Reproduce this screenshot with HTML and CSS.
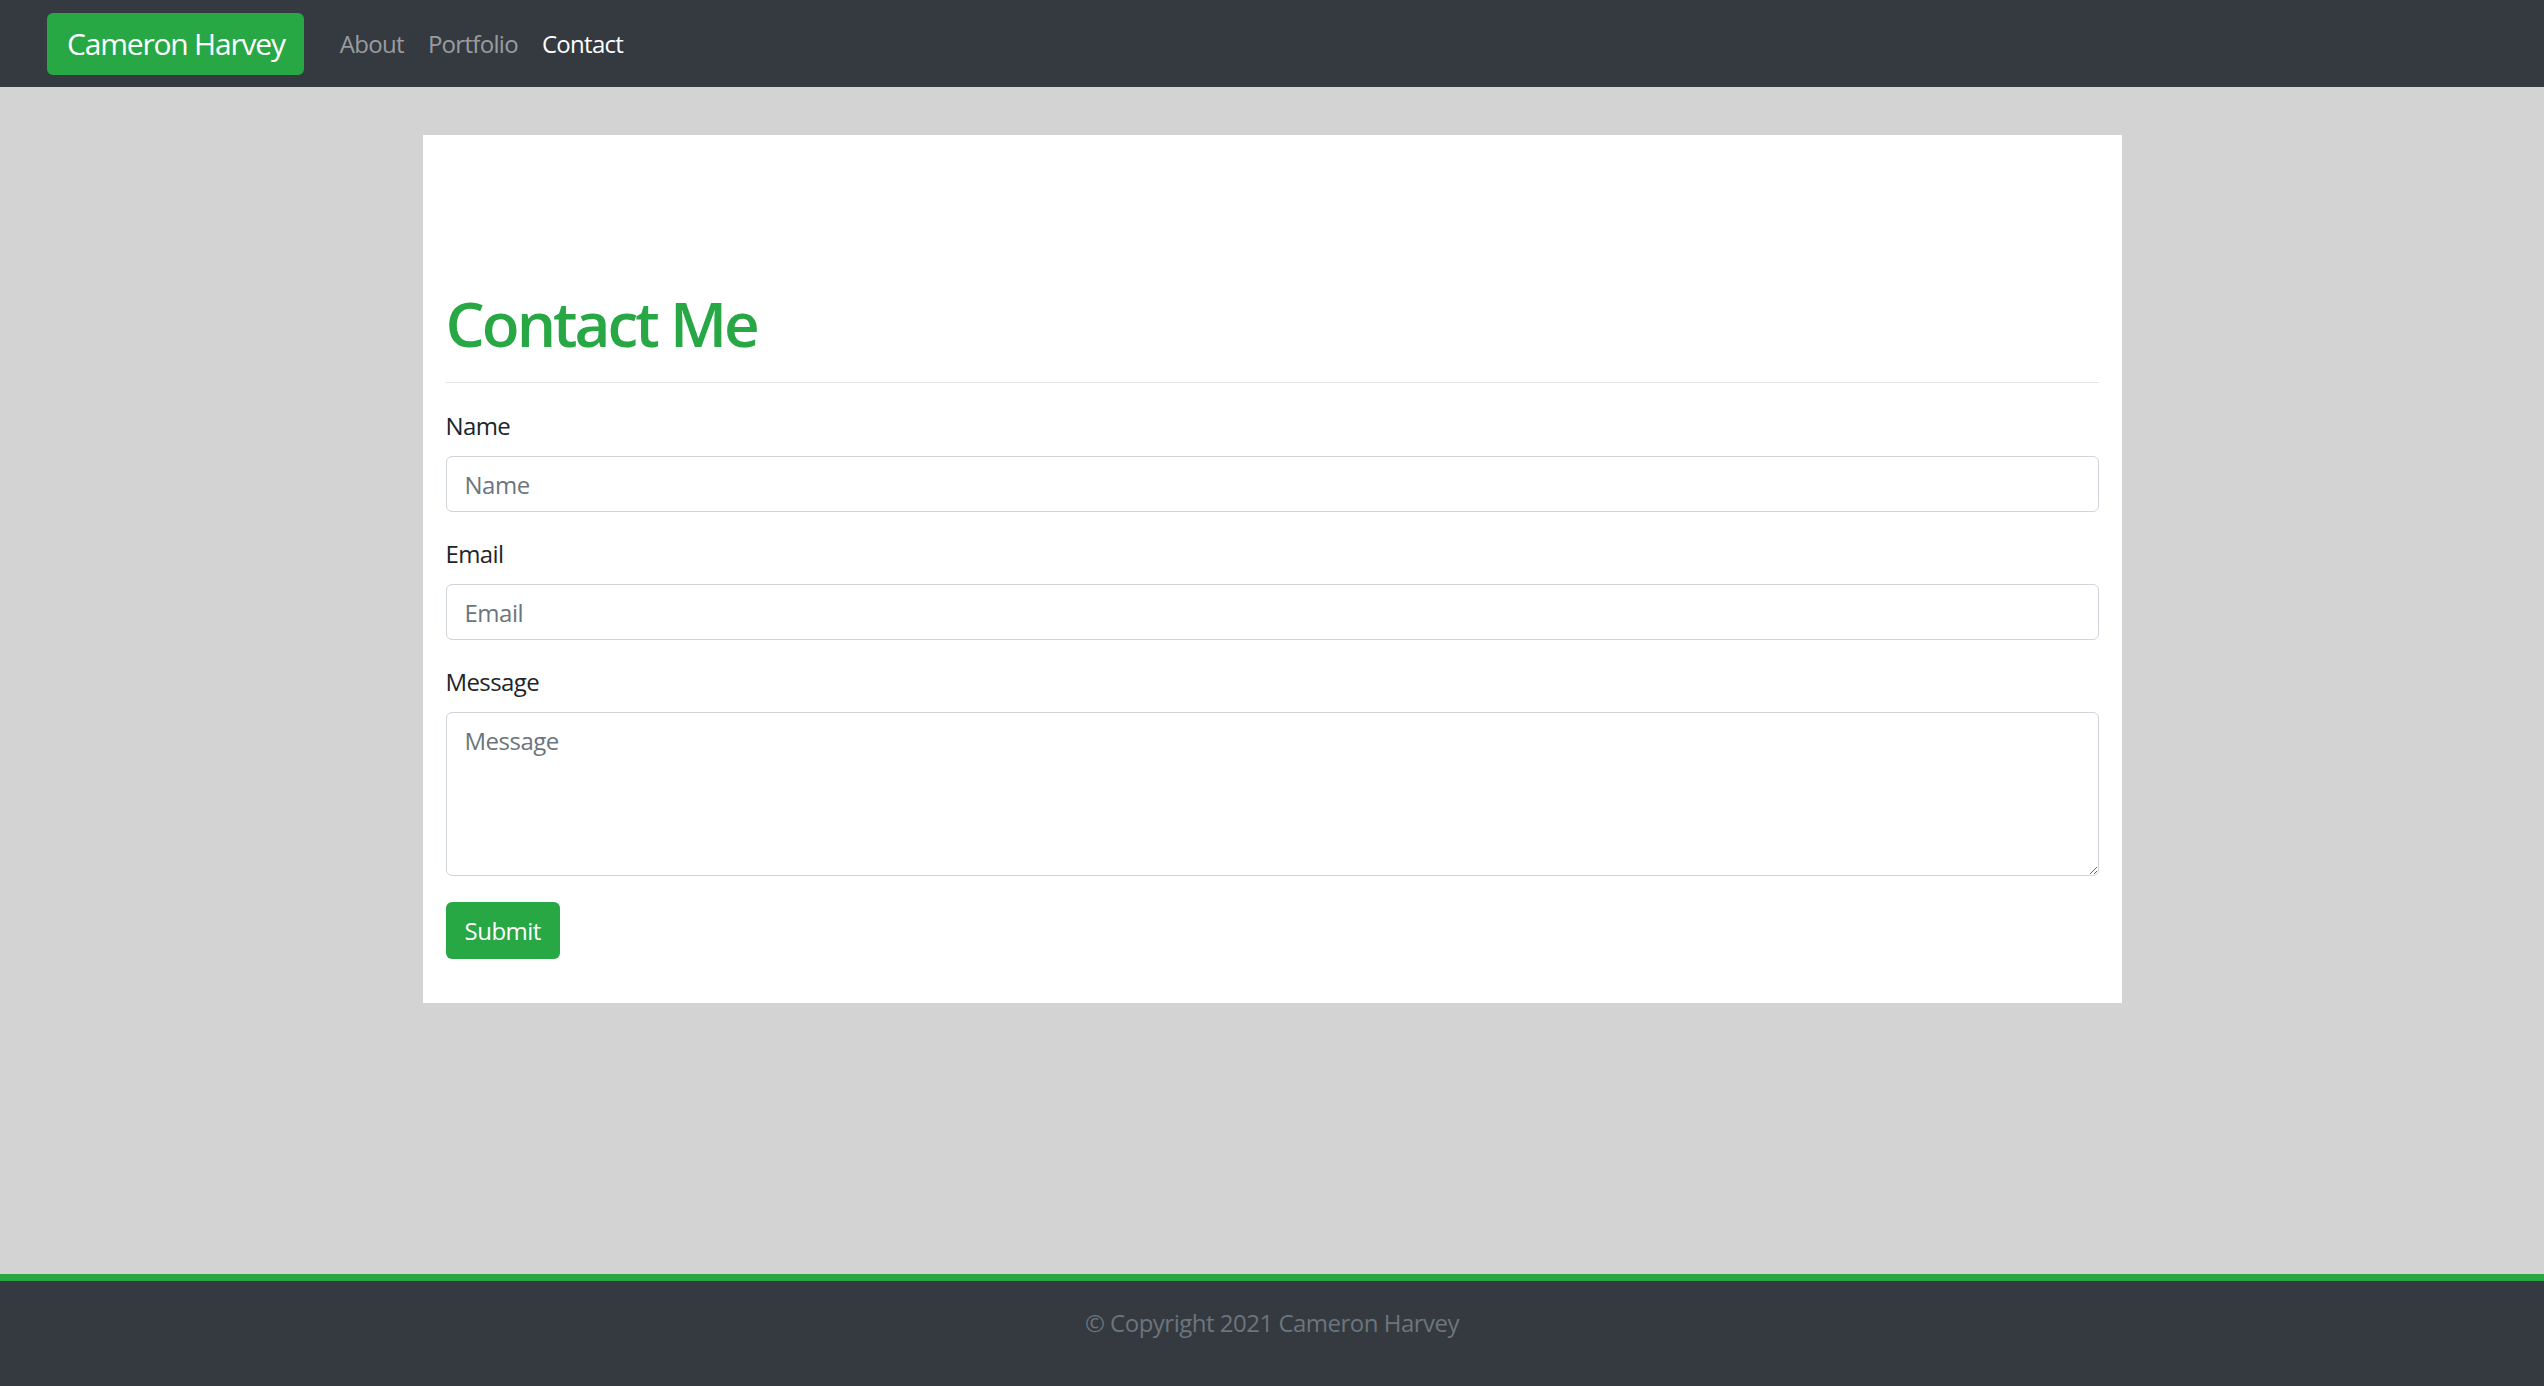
FILE: index.html
```html
<!DOCTYPE html>
<html lang="en">
<head>
<meta charset="utf-8">
<title>Contact - Cameron Harvey</title>
<link rel="stylesheet" href="styles.css">
</head>
<body>
<nav class="navbar">
  <a class="brand" href="#">Cameron Harvey</a>
  <ul class="nav-links">
    <li><a class="nav-link" href="#">About</a></li>
    <li><a class="nav-link" href="#">Portfolio</a></li>
    <li><a class="nav-link active" href="#">Contact</a></li>
  </ul>
</nav>
<main class="main">
  <section class="card">
    <h1 class="title">Contact Me</h1>
    <hr class="divider">
    <form class="form">
      <div class="form-group">
        <label class="label" for="name">Name</label>
        <input class="control" id="name" type="text" placeholder="Name">
      </div>
      <div class="form-group">
        <label class="label" for="email">Email</label>
        <input class="control" id="email" type="email" placeholder="Email">
      </div>
      <div class="form-group form-group-last">
        <label class="label" for="message">Message</label>
        <textarea class="control textarea" id="message" placeholder="Message"></textarea>
      </div>
      <button class="btn" type="submit">Submit</button>
    </form>
  </section>
</main>
<footer class="footer">
  <p class="copyright">© Copyright 2021 Cameron Harvey</p>
</footer>
</body>
</html>
```
FILE: styles.css
```css
* { box-sizing: border-box; }

html, body { margin: 0; padding: 0; }

body {
  font-family: "Open Sans", "Noto Sans", sans-serif;
  background: #d3d3d3;
  color: #212529;
  min-height: 100vh;
  display: flex;
  flex-direction: column;
}

.navbar {
  height: 87px;
  background: #343a40;
  display: flex;
  align-items: center;
  padding: 0 47px;
}

.brand {
  display: flex;
  align-items: center;
  height: 62px;
  padding: 0 19px 0 20px;
  background: #28a745;
  color: #fff;
  font-size: 30px;
  text-decoration: none;
  border-radius: 6px;
  margin-right: 24px;
  letter-spacing: -1.2px;
}

.nav-links {
  list-style: none;
  margin: 0;
  padding: 0;
  display: flex;
}

.nav-link {
  display: block;
  padding: 0 12px;
  font-size: 24px;
  line-height: 36px;
  color: rgba(255, 255, 255, 0.5);
  text-decoration: none;
  letter-spacing: -0.7px;
}

.nav-link.active { color: #fff; }

.main {
  flex: 1;
  padding-top: 48px;
}

.card {
  width: 1699px;
  margin: 0 auto;
  background: #fff;
  padding: 151px 23px 44px;
}

.title {
  margin: 0;
  font-size: 62px;
  line-height: 74px;
  font-weight: 600;
  color: #28a745;
  letter-spacing: -3px;
}

.divider {
  margin: 22px 0 25px;
  border: 0;
  border-top: 1px solid rgba(0, 0, 0, 0.1);
}

.form-group { margin-bottom: 24px; }
.form-group-last { margin-bottom: 26px; }

.label {
  display: block;
  font-size: 24px;
  line-height: 36px;
  margin-bottom: 12px;
  color: #212529;
  letter-spacing: -0.6px;
}

.control {
  display: block;
  width: 100%;
  height: 56px;
  padding: 0 18px;
  font-family: inherit;
  font-size: 24px;
  color: #495057;
  background: #fff;
  border: 1px solid #ced4da;
  border-radius: 6px;
  letter-spacing: -0.5px;
}

.control::placeholder { color: #6c757d; opacity: 1; }

.textarea {
  height: 164px;
  padding: 10px 18px;
  line-height: 36px;
  resize: vertical;
}

.btn {
  display: block;
  height: 57px;
  padding: 0 19px;
  background: #28a745;
  color: #fff;
  font-family: inherit;
  font-size: 24px;
  border: 0;
  border-radius: 6px;
  letter-spacing: -0.5px;
}

.footer {
  background: #343a40;
  border-top: 7px solid #28a745;
  padding: 24px 0 45px;
  text-align: center;
}

.copyright {
  margin: 0;
  font-size: 24px;
  line-height: 36px;
  color: #6c757d;
  letter-spacing: -0.5px;
}
```
